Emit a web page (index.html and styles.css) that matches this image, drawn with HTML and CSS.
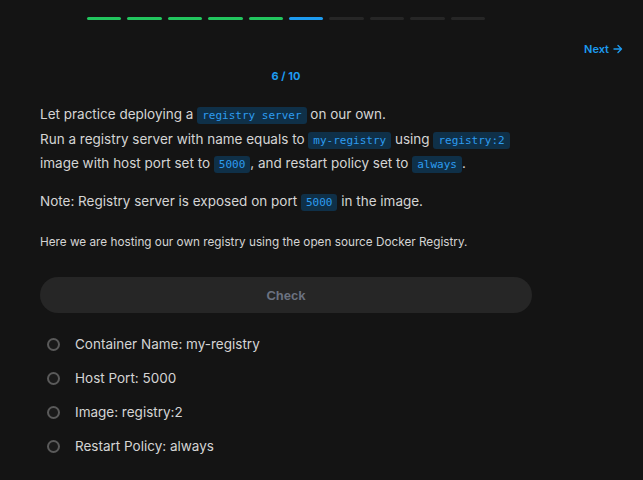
FILE: index.html
```html
<!DOCTYPE html>
<html>
<head>
<meta charset="utf-8">
<link rel="stylesheet" href="styles.css">
</head>
<body>
<div class="page">
  <div class="progress">
    <span class="seg done"></span><span class="seg done"></span><span class="seg done"></span><span class="seg done"></span><span class="seg done"></span>
    <span class="seg current"></span>
    <span class="seg"></span><span class="seg"></span><span class="seg"></span><span class="seg"></span>
  </div>
  <div class="nav">
    <a class="next">Next <svg width="10" height="10" viewBox="0 0 10 10"><path d="M1 5h7.5M5 1.5L8.5 5 5 8.5" fill="none" stroke="currentColor" stroke-width="1.4" stroke-linecap="round" stroke-linejoin="round"/></svg></a>
  </div>
  <div class="content">
    <div class="counter">6 / 10</div>
    <p class="main">Let practice deploying a <code>registry server</code> on our own.<br>Run a registry server with name equals to <code>my-registry</code> using <code>registry:2</code><br>image with host port set to <code>5000</code>, and restart policy set to <code>always</code>.</p>
    <p class="main note">Note: Registry server is exposed on port <code>5000</code> in the image.</p>
    <p class="small">Here we are hosting our own registry using the open source Docker Registry.</p>
    <button class="check">Check</button>
    <ul class="tasks">
      <li><span class="radio"></span>Container Name: my-registry</li>
      <li><span class="radio"></span>Host Port: 5000</li>
      <li><span class="radio"></span>Image: registry:2</li>
      <li><span class="radio"></span>Restart Policy: always</li>
    </ul>
  </div>
</div>
</body>
</html>
```
FILE: styles.css
```css
html, body {
  margin: 0;
  padding: 0;
  background: #141414;
  height: 100%;
  overflow: hidden;
}
body {
  font-family: Inter, "Noto Sans", sans-serif;
  color: #d4d4d4;
}
.page {
  width: 643px;
}
.progress {
  display: flex;
  gap: 6px;
  width: 398px;
  margin: 17px 0 0 87px;
}
.seg {
  flex: 1;
  height: 3px;
  border-radius: 2px;
  background: #262626;
}
.seg.done { background: #22c55e; }
.seg.current { background: #1d9bf0; }
.nav {
  display: flex;
  justify-content: flex-end;
  padding-right: 20px;
  margin-top: 21px;
}
.next {
  display: flex;
  align-items: center;
  gap: 4px;
  color: #1d9bf0;
  font-size: 11px;
  font-weight: 600;
  line-height: 16px;
}
.content {
  width: 492px;
  margin-left: 40px;
}
.counter {
  text-align: center;
  color: #1d9bf0;
  font-size: 11px;
  font-weight: 700;
  line-height: 16px;
  margin-top: 11px;
}
.main {
  font-size: 13.5px;
  line-height: 22.5px;
  margin: 19px 0 0;
}
.main.note {
  margin-top: 13px;
}
code {
  font-family: "DejaVu Sans Mono", "Liberation Mono", monospace;
  font-size: 11px;
  color: #2d9cf0;
  background: #0f3048;
  padding: 2px 5px;
  border-radius: 3px;
}
.small {
  font-size: 11.75px;
  line-height: 18px;
  margin: 19px 0 0;
}
.check {
  display: block;
  width: 492px;
  height: 36px;
  margin-top: 26px;
  border: none;
  border-radius: 18px;
  background: #262626;
  color: #6b7280;
  font-family: "Liberation Sans", Arial, sans-serif;
  font-size: 13px;
  font-weight: 700;
}
.tasks {
  list-style: none;
  margin: 14px 0 0;
  padding: 0;
}
.tasks li {
  display: flex;
  align-items: center;
  height: 34px;
  font-size: 13.5px;
}
.radio {
  box-sizing: border-box;
  width: 13px;
  height: 13px;
  border-radius: 50%;
  border: 2px solid #5a5a5a;
  margin: 0 15px 0 7px;
  background: #1a1a1a;
}
```
